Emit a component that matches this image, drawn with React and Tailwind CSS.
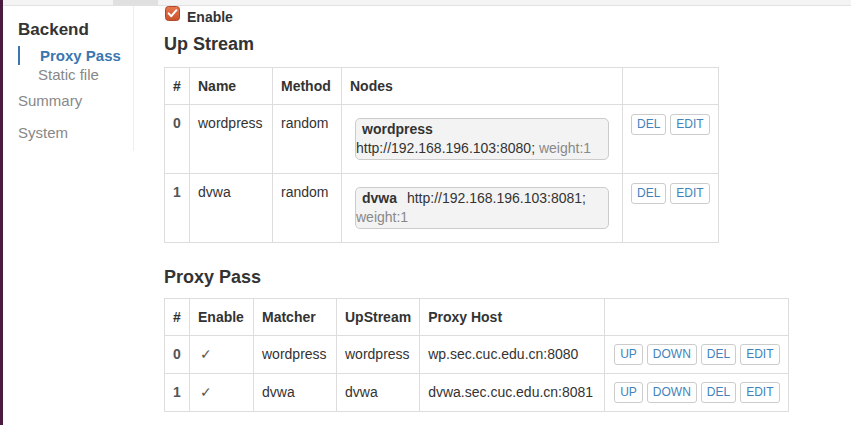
import React from "react";

const upstreams = [
  { id: 0, name: "wordpress", method: "random", url: "http://192.168.196.103:8080;", weight: "weight:1" },
  { id: 1, name: "dvwa", method: "random", url: "http://192.168.196.103:8081;", weight: "weight:1" },
];

const proxies = [
  { id: 0, matcher: "wordpress", upstream: "wordpress", host: "wp.sec.cuc.edu.cn:8080" },
  { id: 1, matcher: "dvwa", upstream: "dvwa", host: "dvwa.sec.cuc.edu.cn:8081" },
];

function Btn({ children }) {
  return (
    <button className="inline-block h-[21px] rounded-[3px] border border-[#ccc] bg-white px-[5px] text-[12px] leading-[19px] text-[#4283bb]">
      {children}
    </button>
  );
}

function Checkbox() {
  return (
    <svg width="15" height="15" viewBox="0 0 15 15" className="shrink-0">
      <defs>
        <linearGradient id="cb" x1="0" y1="0" x2="0" y2="1">
          <stop offset="0" stopColor="#e8774f" />
          <stop offset="1" stopColor="#c9512d" />
        </linearGradient>
      </defs>
      <rect x="0.5" y="0.5" width="14" height="14" rx="3" fill="url(#cb)" stroke="#b0482a" />
      <path d="M3.6 7.4 L6.3 10.2 L11.4 4.2" fill="none" stroke="#fff" strokeWidth="2" strokeLinecap="round" strokeLinejoin="round" />
    </svg>
  );
}

const td = "border border-[#ddd] p-[8px] align-top";
const th = "border border-[#ddd] p-[8px] text-left align-top font-bold";

export default function App() {
  return (
    <div className="flex h-[425px] w-[851px] overflow-hidden bg-white text-[14px] leading-[20px] text-[#333]" style={{ fontFamily: '"Liberation Sans", Arial, sans-serif' }}>
      <div className="w-[3px] shrink-0 bg-[#4b1a3f]" />
      <div className="flex flex-1 flex-col">
        <div className="flex h-[6px] shrink-0 border-b border-[#e2e2e2] bg-[#f4f4f4]">
          <div className="w-[110px]" />
          <div className="w-[45px] bg-[#e0e0e0]" />
        </div>
        <div className="flex flex-1">
          <aside className="h-[145px] w-[131px] shrink-0 border-r border-[#eee] pl-[15px] pt-[12px]">
            <div className="text-[17px] font-bold leading-[24px] text-[#333]">Backend</div>
            <div className="mt-[4px] border-l-2 border-[#3a77b0] pl-[20px] text-[15px] font-bold leading-[19px] text-[#3a77b0]">
              Proxy Pass
            </div>
            <div className="pl-[20px] text-[15px] leading-[19px] text-[#888]">Static file</div>
            <div className="mt-[7px] text-[15px] leading-[20px] text-[#888]">Summary</div>
            <div className="mt-[12px] text-[15px] leading-[20px] text-[#888]">System</div>
          </aside>

          <main className="flex-1 pl-[30px]">
            <label className="flex items-start gap-[7px] pl-px">
              <Checkbox />
              <span className="mt-px font-bold leading-[20px]">Enable</span>
            </label>

            <h4 className="mt-[7px] text-[18px] font-bold leading-[20px]">Up Stream</h4>

            <table className="mt-[13px] border-collapse">
              <thead>
                <tr>
                  <th className={`${th} w-[25px]`}>#</th>
                  <th className={`${th} w-[83px]`}>Name</th>
                  <th className={`${th} w-[69px]`}>Method</th>
                  <th className={`${th} w-[281px]`}>Nodes</th>
                  <th className={`${th} w-[94px]`}></th>
                </tr>
              </thead>
              <tbody>
                {upstreams.map((u) => (
                  <tr key={u.id}>
                    <td className={`${td} font-bold text-[#555]`}>{u.id}</td>
                    <td className={td}>{u.name}</td>
                    <td className={td}>{u.method}</td>
                    <td className={`${td} pl-[13px]`}>
                      <div className="mb-[5px] mt-[5px] w-[254px] rounded-[5px] border border-[#ccc] bg-[#f3f3f3] pb-[1px] pt-[1px] leading-[19px]">
                        <span className="px-[6px] font-bold">{u.name}</span>{" "}
                        <span className="whitespace-nowrap">{u.url}</span>{" "}
                        <span className="whitespace-nowrap text-[#888]">{u.weight}</span>
                      </div>
                    </td>
                    <td className={`${td} pl-[8px]`}>
                      <div className="mt-px flex gap-[4px]">
                        <Btn>DEL</Btn>
                        <Btn>EDIT</Btn>
                      </div>
                    </td>
                  </tr>
                ))}
              </tbody>
            </table>

            <h4 className="mt-[24px] text-[18px] font-bold leading-[20px]">Proxy Pass</h4>

            <table className="mt-[11px] border-collapse">
              <thead>
                <tr>
                  <th className={`${th} w-[25px]`}>#</th>
                  <th className={`${th} w-[64px]`}>Enable</th>
                  <th className={`${th} w-[83px]`}>Matcher</th>
                  <th className={`${th} w-[83px]`}>UpStream</th>
                  <th className={`${th} w-[185px]`}>Proxy Host</th>
                  <th className={`${th} w-[183px]`}></th>
                </tr>
              </thead>
              <tbody>
                {proxies.map((p) => (
                  <tr key={p.id}>
                    <td className={`${td} font-bold text-[#555]`}>{p.id}</td>
                    <td className={`${td} pl-[10px] text-[#555]`}>✓</td>
                    <td className={td}>{p.matcher}</td>
                    <td className={td}>{p.upstream}</td>
                    <td className={td}>{p.host}</td>
                    <td className={`${td} pl-[9px]`}>
                      <div className="flex gap-[4px]">
                        <Btn>UP</Btn>
                        <Btn>DOWN</Btn>
                        <Btn>DEL</Btn>
                        <Btn>EDIT</Btn>
                      </div>
                    </td>
                  </tr>
                ))}
              </tbody>
            </table>
          </main>
        </div>
      </div>
    </div>
  );
}
